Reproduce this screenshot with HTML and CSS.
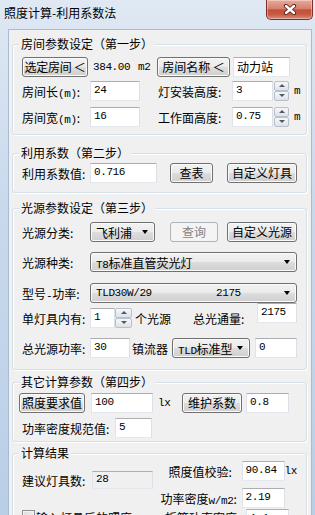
FILE: index.html
```html
<!DOCTYPE html>
<html lang="zh-CN">
<head>
  <meta charset="UTF-8">
  <meta name="viewport" content="width=device-width, initial-scale=1.0">
  <title>照度计算-利用系数法</title>
  <link rel="stylesheet" href="styles.css">
</head>
<body>
  <div class="window">
    <div class="titlebar">
      <span class="title">照度计算-利用系数法</span>
      <div class="close-btn">
        <svg width="14" height="11" viewBox="0 0 14 11">
          <path d="M3 2 L11 9 M11 2 L3 9" stroke="#5a1c12" stroke-width="4.2" stroke-linecap="round"/>
          <path d="M3 2 L11 9 M11 2 L3 9" stroke="#fff" stroke-width="2.4" stroke-linecap="round"/>
        </svg>
      </div>
    </div>

    <div class="client">
      <!-- step 1 -->
      <fieldset class="group g1">
        <legend>房间参数设定（第一步）</legend>
        <div class="row">
          <button class="btn btn-pick">选定房间 ＜</button>
          <span class="mono area">384.00</span>
          <span class="mono unit-m2">m2</span>
          <button class="btn btn-name">房间名称 ＜</button>
          <input class="tb tb-name" value="动力站">
        </div>
        <div class="row r-g1b">
          <span class="lbl">房间长<span class="mono">(m)</span>:</span>
          <input class="tb w50" value="24">
          <span class="lbl lbl-h">灯安装高度:</span>
          <input class="tb w41" value="3">
          <span class="spin"><i class="up"></i><i class="down"></i></span>
          <span class="mono unit-m">m</span>
        </div>
        <div class="row r-g1c">
          <span class="lbl">房间宽<span class="mono">(m)</span>:</span>
          <input class="tb w50" value="16">
          <span class="lbl lbl-h">工作面高度:</span>
          <input class="tb w41" value="0.75">
          <span class="spin"><i class="up"></i><i class="down"></i></span>
          <span class="mono unit-m">m</span>
        </div>
      </fieldset>

      <!-- step 2 -->
      <fieldset class="group g2">
        <legend>利用系数（第二步）</legend>
        <div class="row">
          <span class="lbl">利用系数值:</span>
          <input class="tb w67" value="0.716">
          <button class="btn btn-look">查表</button>
          <button class="btn btn-custom btn-custom-a">自定义灯具</button>
        </div>
      </fieldset>

      <!-- step 3 -->
      <fieldset class="group g3">
        <legend>光源参数设定（第三步）</legend>
        <div class="row">
          <span class="lbl">光源分类:</span>
          <div class="combo w65"><span>飞利浦</span><i class="arrow"></i></div>
          <button class="btn btn-query" disabled>查询</button>
          <button class="btn btn-custom btn-custom-b">自定义光源</button>
        </div>
        <div class="row r-g3b">
          <span class="lbl">光源种类:</span>
          <div class="combo w207"><span><span class="mono">T8</span>标准直管荧光灯</span><i class="arrow"></i></div>
        </div>
        <div class="row r-g3c">
          <span class="lbl">型号<span class="mono">-</span>功率:</span>
          <div class="combo w207 mono"><span class="model">TLD30W/29</span><span class="flux">2175</span><i class="arrow"></i></div>
        </div>
        <div class="row r-g3d">
          <span class="lbl">单灯具内有:</span>
          <input class="tb w25" value="1">
          <span class="spin spin-wide"><i class="up"></i><i class="down"></i></span>
          <span class="txt-src">个光源</span>
          <span class="lbl-flux">总光通量:</span>
          <input class="tb w40 tb-raised" value="2175">
        </div>
        <div class="row r-g3e">
          <span class="lbl">总光源功率:</span>
          <input class="tb w40" value="30">
          <span class="txt-ballast">镇流器</span>
          <div class="combo w78"><span><span class="mono">TLD</span>标准型</span><i class="arrow"></i></div>
          <input class="tb w42 tb-ballast" value="0">
        </div>
      </fieldset>

      <!-- step 4 -->
      <fieldset class="group g4">
        <legend>其它计算参数（第四步）</legend>
        <div class="row">
          <button class="btn btn-lux">照度要求值</button>
          <input class="tb w62 tb-lux" value="100">
          <span class="mono unit-lx">lx</span>
          <button class="btn btn-maint">维护系数</button>
          <input class="tb w43 tb-maint" value="0.8">
        </div>
        <div class="row r-g4b">
          <span class="lbl lbl-long">功率密度规范值:</span>
          <input class="tb w37" value="5">
        </div>
      </fieldset>

      <!-- result -->
      <fieldset class="group g5">
        <legend>计算结果</legend>
        <div class="res">
          <div class="res-left">
            <span class="lbl lbl-count">建议灯具数:</span>
            <input class="tb tb-ro" value="28" readonly>
          </div>
          <div class="res-right">
            <div class="row">
              <span class="rlbl rlbl-in">照度值校验:</span>
              <input class="tb w43" value="90.84">
              <span class="mono">lx</span>
            </div>
            <div class="row r-res2">
              <span class="rlbl">功率密度<span class="mono">w/m2</span>:</span>
              <input class="tb w43" value="2.19">
            </div>
          </div>
        </div>
        <div class="row r-chk">
          <label class="chk-wrap"><span class="chk"></span>输入灯具后的照度</label>
          <span class="rlbl">折算功率密度:</span>
          <input class="tb w43" value="1.1">
        </div>
      </fieldset>
    </div>
  </div>
</body>
</html>
```

FILE: styles.css
```css
* {
  box-sizing: border-box;
}

html,
body {
  margin: 0;
  padding: 0;
  height: 100%;
  overflow: hidden;
}

body {
  font-family: "Noto Sans CJK SC", sans-serif;
  font-size: 12px;
  color: #000;
  background: #c8d8ea;
}

.window {
  width: 315px;
  height: 515px;
  padding: 0 3px 0 8px;
  display: flex;
  flex-direction: column;
  background: linear-gradient(to bottom, #dfe8f3, #c9d9ec 40%, #b9cfe7);
}

/* title bar */
.titlebar {
  height: 29px;
  flex: none;
  margin: 0 -1px 0 -4px;
  display: flex;
  justify-content: space-between;
  align-items: flex-start;
}

.title {
  padding-top: 5px;
  line-height: 16px;
  color: #000;
}

.close-btn {
  width: 47px;
  height: 20px;
  border: 1px solid #7a3027;
  border-top: none;
  border-radius: 0 0 5px 5px;
  background: linear-gradient(to bottom, #e9aa9c, #d6806d 45%, #c4503a 52%, #c55a44 75%, #db8c73);
  box-shadow: inset 0 0 0 1px rgba(255, 255, 255, 0.35);
  display: flex;
  align-items: center;
  justify-content: center;
}

.client {
  flex: 1;
  min-height: 0;
  overflow: hidden;
  background: #f0f0f0;
  border: 1px solid #a7bbd3;
  border-bottom: none;
  padding: 0 4px 0 3px;
}

/* group boxes */
.group {
  margin: 0;
  min-width: 0;
  padding: 0 9px;
  border: 1px solid #d5dfe5;
  border-radius: 3px;
  box-shadow: inset 1px 1px 0 #fff, 1px 1px 0 #fff;
}

.group legend {
  padding: 0 2px;
  margin-left: -3px;
  line-height: 16px;
  background: #f0f0f0;
}

.g1 {
  margin-top: 6px;
  padding-top: 5px;
  padding-bottom: 7px;
}

.g2 {
  margin-top: 10px;
  padding-top: 2px;
  padding-bottom: 9px;
}

.g3 {
  margin-top: 7px;
  padding-top: 6px;
  padding-bottom: 11px;
}

.g4 {
  margin-top: 4px;
  padding-top: 3px;
  padding-bottom: 3px;
}

.g5 {
  margin-top: 3px;
  padding-top: 0;
  padding-bottom: 10px;
}

/* rows */
.row {
  display: flex;
  align-items: center;
  height: 20px;
  white-space: nowrap;
}

.r-g1b { margin-top: 4px; }
.r-g1c { margin-top: 6px; }
.r-g3b { margin-top: 10px; }
.r-g3c { margin-top: 11px; }
.r-g3d { margin-top: 5px; }
.r-g3e { margin-top: 10px; }
.r-g4b { margin-top: 5px; }
.r-res2 { margin-top: 7px; }

.r-chk {
  margin-top: 1px;
  align-items: flex-start;
}

.lbl {
  width: 68px;
  flex: none;
}

.lbl-h {
  margin-left: 18px;
  width: 74px;
}

.lbl-long {
  width: 93px;
}

.mono {
  font-family: "Liberation Mono", monospace;
  font-size: 11px;
  letter-spacing: -0.4px;
}

/* text boxes */
.tb {
  height: 20px;
  margin: 0;
  padding: 0 3px 3px;
  flex: none;
  border: 1px solid;
  border-color: #abadb3 #dbdfe6 #e3e9ef #e2e3ea;
  background: #fff;
  color: #000;
  font-family: "Liberation Mono", monospace;
  font-size: 11px;
  letter-spacing: -0.4px;
  outline: none;
}

.w25 { width: 25px; }
.w37 { width: 37px; }
.w40 { width: 40px; }
.w41 { width: 41px; }
.w42 { width: 42px; }
.w43 { width: 43px; }
.w50 { width: 50px; }
.w62 { width: 62px; }
.w65 { width: 65px; }
.w67 { width: 67px; }
.w78 { width: 78px; }
.w207 { width: 207px; }

.tb-name {
  margin-left: 3px;
  width: 57px;
  font-family: "Noto Sans CJK SC", sans-serif;
  font-size: 12px;
  letter-spacing: 0;
  padding-bottom: 1px;
}

.tb-raised {
  align-self: flex-start;
  margin-top: -5px;
}

.tb-ballast { margin-left: 5px; }
.tb-lux { margin-left: 6px; }
.tb-maint { margin-left: 4px; }

.tb-ro {
  width: 61px;
  height: 18px;
  background: #f0f0f0;
  padding-bottom: 2px;
}

/* buttons */
.btn {
  height: 20px;
  margin: 0;
  padding: 0;
  flex: none;
  white-space: nowrap;
  border: 1px solid #707070;
  border-radius: 3px;
  background: linear-gradient(to bottom, #f2f2f2, #ebebeb 50%, #dddddd 51%, #cfcfcf);
  box-shadow: inset 0 0 0 1px #fbfbfb;
  font-family: "Noto Sans CJK SC", sans-serif;
  font-size: 12px;
  line-height: 16px;
  color: #000;
}

.btn:disabled {
  border-color: #adb2b5;
  background: #f4f4f4;
  box-shadow: none;
  color: #838383;
}

.btn-pick { width: 66px; letter-spacing: -0.3px; }
.btn-name { margin-left: 5px; width: 73px; }
.btn-look { margin-left: 13px; width: 43px; }
.btn-custom { width: 70px; }
.btn-custom-a { margin-left: 14px; }
.btn-custom-b { margin-left: 9px; }
.btn-query { margin-left: 15px; width: 48px; }
.btn-lux { margin-left: -3px; width: 66px; }
.btn-maint { width: 60px; }

.area {
  margin-left: 5px;
  width: 45px;
}

.unit-m2 { width: 14px; }
.unit-m { margin-left: 5px; }
.unit-lx { margin-left: 5px; width: 24px; }

/* combo boxes */
.combo {
  height: 20px;
  flex: none;
  display: flex;
  align-items: center;
  padding: 0 6px 0 5px;
  border: 1px solid #707070;
  border-radius: 3px;
  background: linear-gradient(to bottom, #f2f2f2, #ebebeb 50%, #dddddd 51%, #cfcfcf);
  box-shadow: inset 0 0 0 1px #fbfbfb;
}

.combo .arrow {
  margin-left: auto;
  width: 0;
  height: 0;
  border-left: 3.5px solid transparent;
  border-right: 3.5px solid transparent;
  border-top: 4px solid #000;
}

.combo .model { width: 120px; }

/* spinner */
.spin {
  width: 15px;
  height: 20px;
  flex: none;
  display: flex;
  flex-direction: column;
  margin-left: 1px;
}

.spin-wide {
  width: 17px;
  margin-left: 0;
}

.spin i {
  position: relative;
  display: block;
  height: 10px;
  border: 1px solid #b7c0cc;
  border-radius: 2px;
  background: linear-gradient(to bottom, #f7f7f7, #dfe2e7);
}

.spin i::after {
  content: "";
  position: absolute;
  left: 50%;
  top: 50%;
  margin: -2px 0 0 -3px;
  border-left: 3px solid transparent;
  border-right: 3px solid transparent;
}

.spin .up::after { border-bottom: 3px solid #4b5a70; }
.spin .down::after { border-top: 3px solid #4b5a70; }

.txt-src {
  margin-left: 3px;
  width: 36px;
}

.lbl-flux {
  margin-left: 22px;
  width: 72px;
}

.txt-ballast {
  margin-left: 2px;
  width: 40px;
}

/* results */
.res {
  display: flex;
}

.res-left {
  width: 143px;
  display: flex;
  align-items: center;
  margin-top: 10px;
  align-self: flex-start;
}

.lbl-count { width: 70px; }

.rlbl {
  width: 81px;
  flex: none;
}

.rlbl-in { padding-left: 8px; }

.chk-wrap {
  width: 143px;
  display: flex;
  align-items: flex-start;
}

.chk {
  width: 13px;
  height: 13px;
  margin: 1px 1px 0 0;
  border: 1px solid #8f8f8f;
  background: linear-gradient(to bottom right, #dcdcdc, #fbfbfb);
  box-shadow: inset 0 0 0 1px #f4f4f4;
}
```
